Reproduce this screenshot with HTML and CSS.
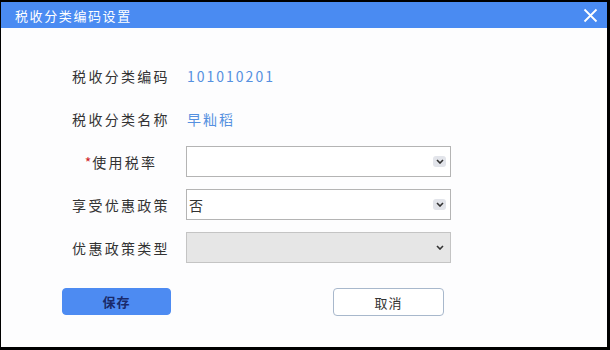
FILE: index.html
```html
<!DOCTYPE html>
<html lang="zh">
<head>
<meta charset="utf-8">
<link rel="stylesheet" href="styles.css">
</head>
<body>
<div class="dialog">
  <div class="header">
    <span class="title">税收分类编码设置</span>
    <svg class="close" width="15" height="15" viewBox="0 0 15 15"><path d="M1.5 1.5L13.5 13.5M13.5 1.5L1.5 13.5" stroke="#fff" stroke-width="1.8" fill="none"/></svg>
  </div>
  <div class="form">
    <div class="label">税收分类编码</div>
    <div class="value">101010201</div>
    <div class="label">税收分类名称</div>
    <div class="value">早籼稻</div>
    <div class="label"><span class="req">*</span>使用税率</div>
    <div class="select"><span class="text"></span><span class="arrow boxed"><svg width="8" height="5" viewBox="0 0 8 5"><path d="M1 1L4 4L7 1" stroke="#333" stroke-width="1.6" fill="none"/></svg></span></div>
    <div class="label">享受优惠政策</div>
    <div class="select"><span class="text">否</span><span class="arrow boxed"><svg width="8" height="5" viewBox="0 0 8 5"><path d="M1 1L4 4L7 1" stroke="#333" stroke-width="1.6" fill="none"/></svg></span></div>
    <div class="label">优惠政策类型</div>
    <div class="select disabled"><span class="text"></span><span class="arrow"><svg width="8" height="5" viewBox="0 0 8 5"><path d="M1 1L4 4L7 1" stroke="#333" stroke-width="1.6" fill="none"/></svg></span></div>
  </div>
  <div class="actions">
    <button class="btn primary">保存</button>
    <button class="btn">取消</button>
  </div>
</div>
</body>
</html>
```
FILE: styles.css
```css
html, body {
  margin: 0;
  padding: 0;
  background: #000;
}
body {
  width: 610px;
  height: 350px;
  padding: 2px 3px 3px 1px;
  box-sizing: border-box;
  font-family: "Noto Sans CJK SC", "Noto Sans", sans-serif;
}
.dialog {
  width: 606px;
  height: 345px;
  background: #fdfdfe;
  display: flex;
  flex-direction: column;
}
.header {
  height: 26px;
  background: #4a8bf2;
  display: flex;
  align-items: center;
  justify-content: space-between;
  padding: 0 9px 0 14px;
}
.title {
  color: #fff;
  font-size: 13px;
  letter-spacing: 1.6px;
}
.close {
  display: block;
}
.form {
  margin-top: 26px;
  padding-left: 71px;
  display: grid;
  grid-template-columns: 98px 265px;
  grid-auto-rows: 43px;
  column-gap: 16px;
  align-items: center;
}
.label {
  text-align: center;
  font-size: 14px;
  letter-spacing: 2.3px;
  color: #333;
  white-space: nowrap;
}
.req {
  color: #d0242a;
  letter-spacing: 0;
  margin-right: 1px;
}
.value {
  font-size: 14px;
  letter-spacing: 2px;
  color: #5590e0;
  padding-left: 1px;
}
.select {
  height: 31px;
  box-sizing: border-box;
  border: 1px solid #b4b4b4;
  background: #fff;
  display: flex;
  align-items: center;
  justify-content: space-between;
  padding: 0 4px 0 2px;
}
.select .text {
  font-size: 14px;
  color: #333;
}
.select.disabled {
  background: #e6e6e6;
  border-color: #c4c4c4;
}
.arrow {
  width: 13px;
  height: 11px;
  display: flex;
  align-items: center;
  justify-content: center;
  border-radius: 3px;
}
.arrow.boxed {
  background: #e2e4ea;
}
.arrow svg {
  display: block;
}
.actions {
  margin-top: 19px;
  padding-left: 61px;
  display: flex;
  gap: 162px;
}
.btn {
  width: 109px;
  height: 27px;
  border-radius: 4px;
  border: 1px solid #a8b8cc;
  background: #fff;
  font-family: "Noto Sans CJK SC", sans-serif;
  font-size: 13px;
  letter-spacing: 1px;
  color: #333;
  padding: 0;
}
.btn.primary {
  background: #4d8bf2;
  border-color: #4d8bf2;
  color: #1a2a6a;
  font-weight: bold;
}
.btn + .btn {
  width: 111px;
  height: 28px;
}
```
